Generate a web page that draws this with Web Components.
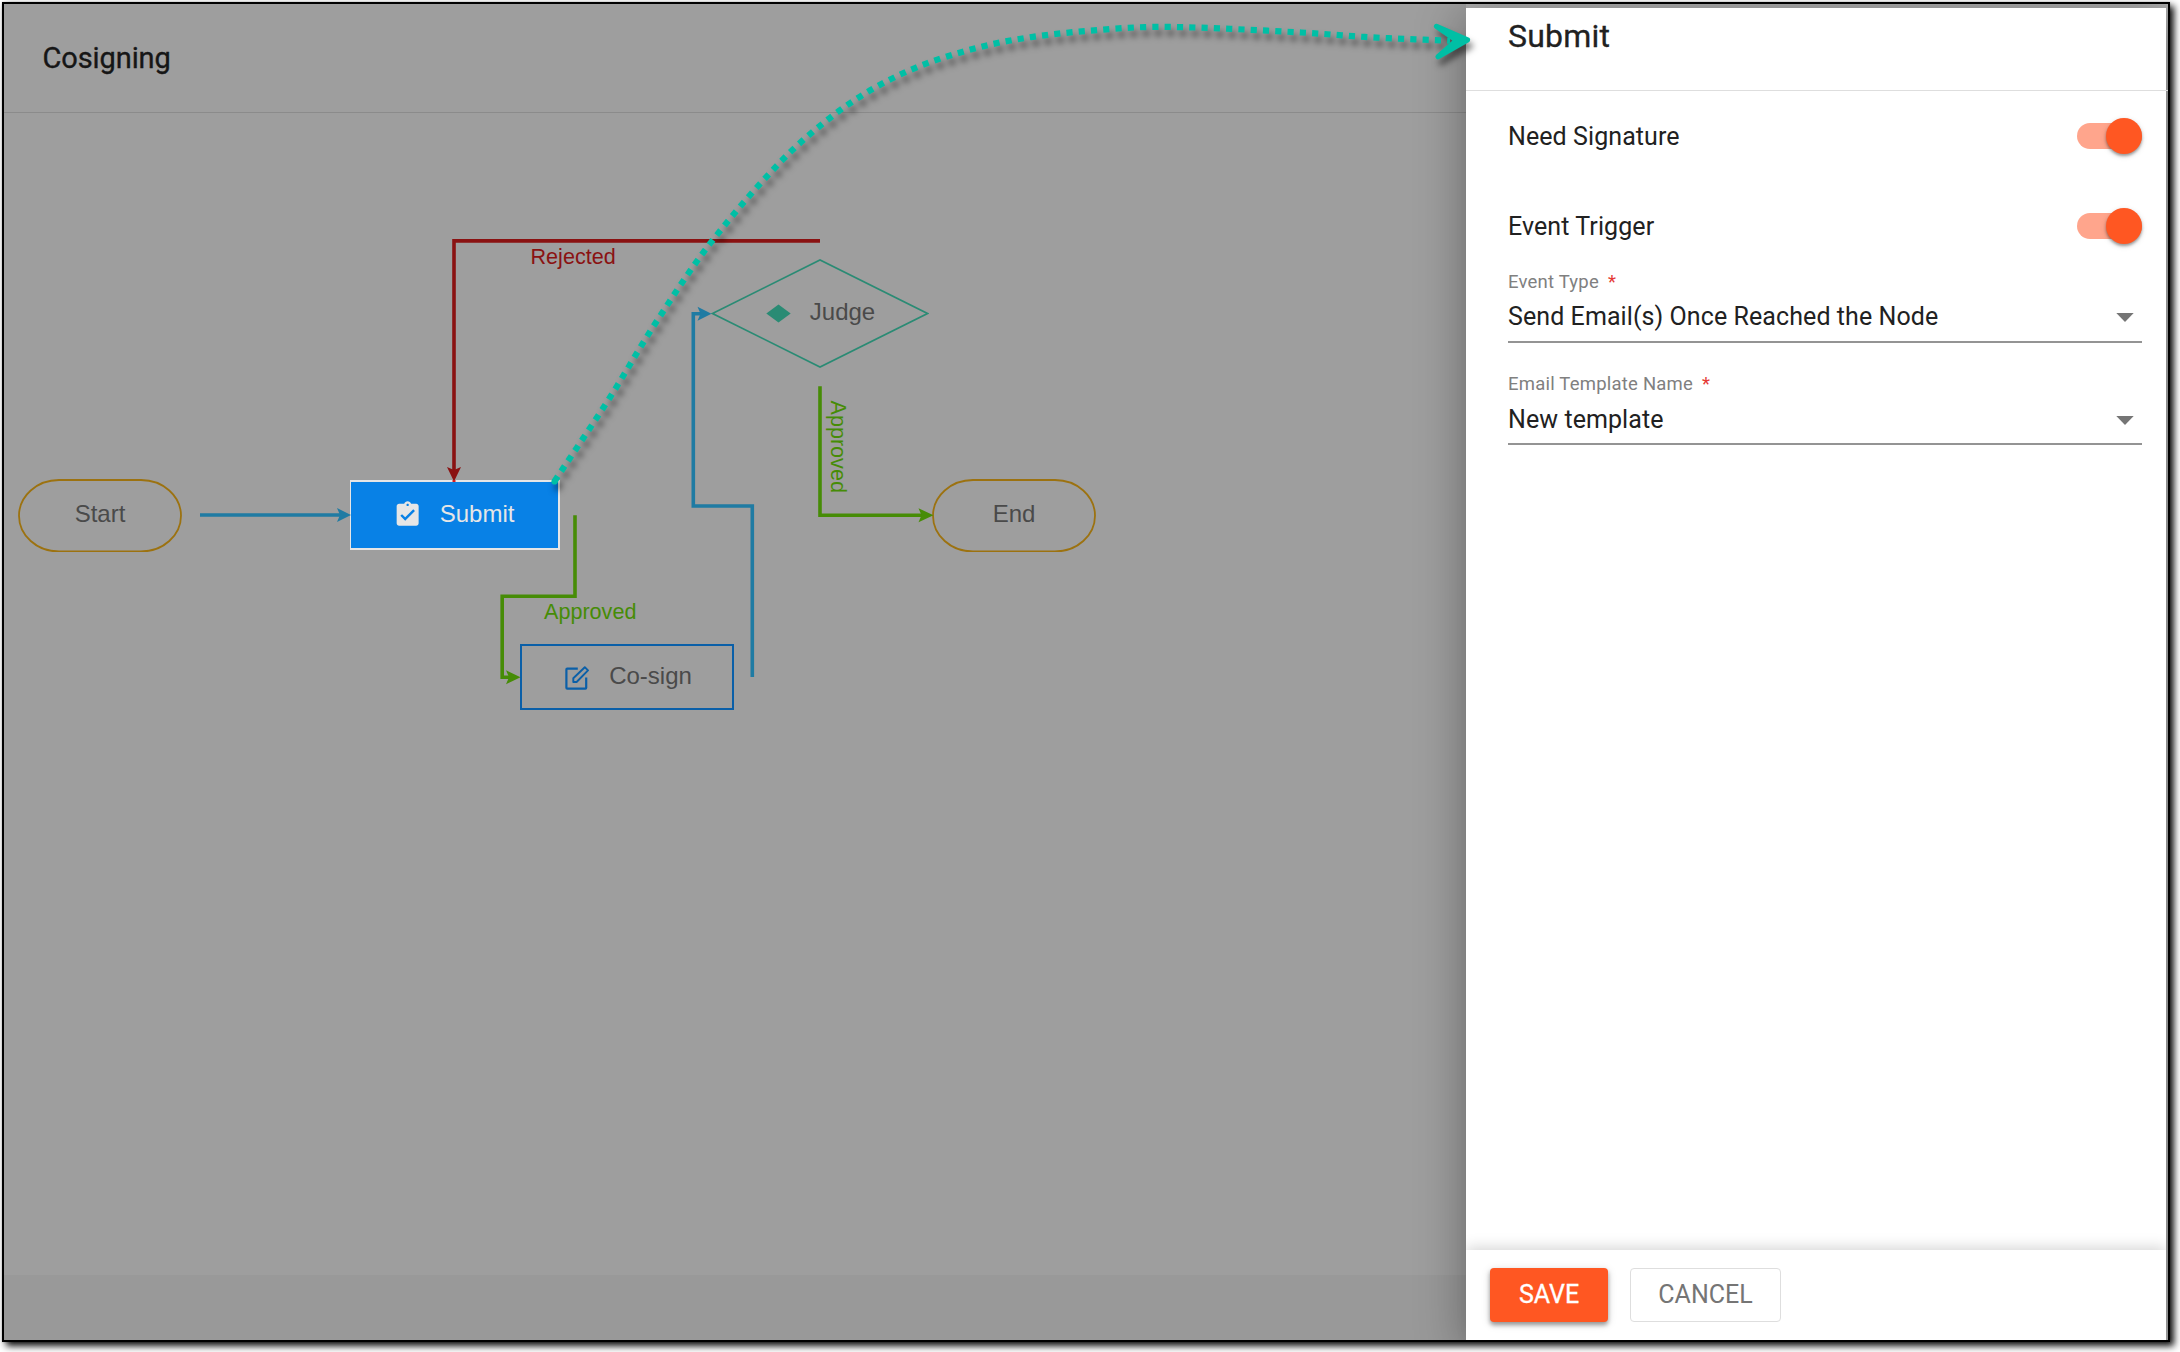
<!DOCTYPE html>
<html lang="en">
<head>
<meta charset="utf-8">
<title>Cosigning</title>
<style>
html,body{margin:0;background:#fff;overflow:hidden}
body{width:2180px;height:1352px;font-family:Roboto,sans-serif;color:#212121}
</style>
</head>
<body>
<app-frame>
  <workflow-page heading="Cosigning">
    <flow-canvas>
      <flow-node kind="pill" style="--x:18;--y:478.5;--w:164;--h:73.5">Start</flow-node>
      <flow-node kind="active" icon="clipboard" style="--x:350;--y:480;--w:210;--h:70">Submit</flow-node>
      <flow-node kind="box" icon="edit" style="--x:520;--y:644;--w:214;--h:66">Co-sign</flow-node>
      <flow-node kind="judge" icon="diamond" style="--x:711;--y:259;--w:218;--h:109">Judge</flow-node>
      <flow-node kind="pill" style="--x:932;--y:478.5;--w:164;--h:73.5">End</flow-node>
    </flow-canvas>
  </workflow-page>
  <side-drawer heading="Submit">
    <switch-row>Need Signature</switch-row>
    <switch-row>Event Trigger</switch-row>
    <select-field label="Event Type">Send Email(s) Once Reached the Node</select-field>
    <select-field label="Email Template Name">New template</select-field>
    <action-button slot="footer" kind="primary">SAVE</action-button>
    <action-button slot="footer" kind="plain">CANCEL</action-button>
  </side-drawer>
  <callout-arrow></callout-arrow>
</app-frame>
<script>
class Base extends HTMLElement {
  constructor(){ super(); this.attachShadow({mode:'open'}); }
  connectedCallback(){ this.shadowRoot.innerHTML = this.render(); }
}

customElements.define('app-frame', class extends Base {
  render(){ return `<style>
    :host{display:grid;grid-template-columns:1462px 702px;box-sizing:border-box;width:2168px;height:1340px;margin:2px;
      border:2px solid #000;background:#9e9e9e;position:relative;box-shadow:4px 4px 7px rgba(0,0,0,.95),0 0 2px rgba(0,0,0,.2)}
  </style><slot></slot>`; }
});

customElements.define('workflow-page', class extends Base {
  render(){ return `<style>
    :host{display:flex;flex-direction:column;height:1336px;min-width:0}
    header{box-sizing:border-box;height:109px;border-bottom:1px solid #8b8b8b;padding:36px 0 0 38.5px}
    h1{margin:0;font-size:29px;line-height:36px;font-weight:400;color:#161616;letter-spacing:-.1px;-webkit-text-stroke:.35px #161616}
    main{flex:1;min-height:0}
    footer{height:65px;background:#999}
  </style><header><h1>${this.getAttribute('heading')}</h1></header><main><slot></slot></main><footer></footer>`; }
});

customElements.define('flow-canvas', class extends Base {
  render(){ return `<style>
    :host{display:block;height:100%;position:relative}
    svg{display:block;width:1462px;height:1162px;position:relative;z-index:1;pointer-events:none}
    text{font:21.6px "Liberation Sans",Arial,sans-serif}
    .l{fill:none;stroke-width:3.6}
  </style>
  <svg viewBox="4 113 1462 1162">
    <g stroke="#1f7ba3" fill="#1f7ba3">
      <path class="l" d="M200 515H344M752.3 677V506H693.3V313.7H705"/>
      <path stroke="none" d="M351 515L337 522L340 515L337 508ZM711.5 313.7L697.5 320.7L700.5 313.7L697.5 306.7Z"/>
    </g>
    <g stroke="#468c06" fill="#468c06">
      <path class="l" d="M575 515.3V596.2H502.2V677.3H514M820 386.3V515.3H927"/>
      <path stroke="none" d="M520.5 677.3L506 684.3L509 677.3L506 670.3ZM933.5 515.3L918.5 522.3L921.5 515.3L918.5 508.3Z"/>
      <text stroke="none" x="544" y="619">Approved</text>
      <text stroke="none" transform="translate(830.5 400.5) rotate(90)">Approved</text>
    </g>
    <g stroke="#8a1212" fill="#8a1212">
      <path class="l" d="M820 240.9H454V474"/>
      <path stroke="none" d="M454 481.5L447 467L454 470L461 467Z"/>
      <path stroke="#d91c1c" d="M454 480V482" stroke-width="3"/>
      <text stroke="none" x="530.5" y="263.7">Rejected</text>
    </g>
  </svg><slot></slot>`; }
});

const ICONS = {
  clipboard:`<svg width="29.3" height="29.3" viewBox="0 0 24 24" style="margin:0 -3.6px"><path fill="#e6e6e6" d="M19 3h-4.18C14.4 1.84 13.3 1 12 1s-2.4.84-2.82 2H5c-1.1 0-2 .9-2 2v14c0 1.1.9 2 2 2h14c1.1 0 2-.9 2-2V5c0-1.1-.9-2-2-2zm-7 0c.55 0 1 .45 1 1s-.45 1-1 1-1-.45-1-1 .45-1 1-1zm-2 14l-4-4 1.41-1.41L10 14.17l6.59-6.59L18 9l-8 8z"/></svg>`,
  edit:`<svg width="24" height="24" viewBox="0 0 24 24" fill="none" stroke="#0a5fa8" stroke-width="2.2"><path d="M12.8 2.6H2.2Q1.4 2.6 1.4 3.4V21.8Q1.4 22.6 2.2 22.6H20.4Q21.2 22.6 21.2 21.8V11.5"/><path d="M8.3 16V12.2L19.8 1.2L23 4.4L11.6 16Z" stroke-width="1.9" stroke-linejoin="round"/></svg>`,
  diamond:`<svg width="25" height="19" viewBox="0 0 25 19"><path fill="#2a8b74" d="M12.5 .5L24.7 9.5L12.5 18.5L.3 9.5Z"/></svg>`
};

customElements.define('flow-node', class extends Base {
  render(){
    const k = this.getAttribute('kind'), i = this.getAttribute('icon');
    const shape = {
      pill:`<svg class="bg" viewBox="0 0 164 73.5"><rect x="1" y="1" width="162" height="71.5" rx="40" ry="35.75" fill="none" stroke="#9c7210" stroke-width="1.8"/></svg>`,
      judge:`<svg class="bg" viewBox="0 0 218 109"><path d="M1.5 54.5L109 1L216.500 54.5L109 108Z" fill="none" stroke="#2a8b74" stroke-width="1.6"/></svg>`
    }[k] || '';
    return `<style>
    :host{display:flex;box-sizing:border-box;position:absolute;left:calc((var(--x) - 4)*1px);top:calc((var(--y) - 113)*1px);
      width:calc(var(--w)*1px);height:calc(var(--h)*1px);align-items:center;justify-content:center;
      font:24px/28px "Liberation Sans",Arial,sans-serif;color:#4a4a4a}
    :host([kind=active]){background:#0881e6;border:solid #e6e6e6;border-width:2px 2.500px 2px 1px;color:#e6e6e6}
    :host([kind=box]){border:2px solid #0a5fa8}
    .bg{position:absolute;inset:0;width:100%;height:100%}
    .c{display:flex;align-items:center;gap:22px;padding-bottom:1px}
    :host([kind=judge]) .c{gap:19px;margin-left:1px}
    .t{padding-bottom:2px}
    .c>svg{flex:none;display:block}
    :host([kind=box]) .c>svg{margin-top:3px}
    :host([kind=box]) .c{gap:20px;margin-left:3px}
    :host([kind=active]) .c{gap:21px;margin-left:2px}
    </style>${shape}<div class="c">${ICONS[i]||''}<span class="t"><slot></slot></span></div>`;
  }
});

customElements.define('side-drawer', class extends Base {
  render(){ return `<style>
    :host{display:block;height:1336px;background:#aeaeae;clip-path:inset(0 0 0 -80px);position:relative}
    .panel{display:flex;flex-direction:column;box-sizing:border-box;width:700px;height:1332px;margin-top:4px;background:#fff;
      box-shadow:0 16px 20px -10px rgba(0,0,0,.1),0 8px 44px 4px rgba(0,0,0,.3)}
    header{box-sizing:border-box;width:702px;height:83px;border-bottom:1px solid #dedede;padding:8px 0 0 42px}
    h2{margin:0;font-size:32px;line-height:40px;font-weight:400;letter-spacing:.2px;-webkit-text-stroke:.3px #212121}
    .body{flex:1;display:flex;flex-direction:column;padding:0 24px 0 42px;overflow:hidden}
    footer{box-sizing:border-box;height:90px;display:flex;gap:22px;padding:18px 24px;box-shadow:0 -2px 14px rgba(0,0,0,.18);clip-path:inset(-20px 0 0 0)}
  </style><div class="panel"><header><h2>${this.getAttribute('heading')}</h2></header><div class="body"><slot></slot></div><footer><slot name="footer"></slot></footer></div>`; }
});

customElements.define('switch-row', class extends Base {
  render(){ return `<style>
    :host{display:flex;height:90px;align-items:center;justify-content:space-between;font-size:25px;line-height:30px;letter-spacing:.08px}
    span{padding-top:2px}
    .track{width:65px;height:26px;border-radius:13px;background:#ffa58c;display:flex;align-items:center;justify-content:flex-end}
    .thumb{width:36px;height:36px;flex:none;border-radius:50%;background:#ff5722;box-shadow:0 2px 3px rgba(0,0,0,.35),0 2px 6px rgba(0,0,0,.12)}
  </style><span><slot></slot></span><div class="track"><div class="thumb"></div></div>`; }
});

customElements.define('select-field', class extends Base {
  render(){ return `<style>
    :host{display:flex;flex-direction:column;box-sizing:border-box;height:72px;border-bottom:2px solid #949494;margin-bottom:30px}
    .lab{display:flex;gap:9px;font-size:18.5px;line-height:22px;color:#808080;letter-spacing:.22px}
    i{font-style:normal;color:#e53935}
    .val{display:flex;align-items:center;justify-content:space-between;margin-top:9px;height:30px;font-size:25px;line-height:30px;letter-spacing:.08px;padding-right:8px}
    :host(:last-of-type) .val{margin-top:10px}
  </style><div class="lab"><span>${this.getAttribute('label')}</span><i>*</i></div>
  <div class="val"><span><slot></slot></span><svg width="18" height="9" viewBox="0 0 18 9"><path fill="#757575" d="M.3 0H17.700L9 9Z"/></svg></div>`; }
});

customElements.define('action-button', class extends Base {
  render(){ return `<style>
    :host{display:flex;align-items:center;justify-content:center;box-sizing:border-box;width:118px;height:54px;border-radius:4px;font-size:25px;line-height:30px}
    :host([kind=primary]){background:#ff5722;color:#fff;-webkit-text-stroke:.3px #fff;box-shadow:0 3px 4px rgba(0,0,0,.35),0 2px 10px rgba(0,0,0,.15)}
    :host([kind=plain]){width:151px;border:1px solid #dedede;color:#757575}
  </style><span><slot></slot></span>`; }
});

customElements.define('callout-arrow', class extends Base {
  render(){
    const p=[[554.4,481.5],[609.6,398],[654.3,325],[710,243.7],[781.7,160.7],[836.8,112.7],[889,80],[945.3,57],[1017,39.3],[1114,28.7],[1175.5,27],[1297.8,32.3],[1370.7,37.3],[1450,40.7]];
    let d=`M${p[0]}`;
    // Tangents are weighted by the distance between neighbours so the uneven spacing stays smooth.
    const L=(a,b)=>Math.hypot(a[0]-b[0],a[1]-b[1]);
    const tan=i=>{const a=p[i-1]||p[i],b=p[i+1]||p[i],n=L(a,b);return [(b[0]-a[0])/n,(b[1]-a[1])/n]};
    for(let i=0;i<p.length-1;i++){
      const s=L(p[i],p[i+1])/3,t=tan(i),u=tan(i+1);
      d+=`C${p[i][0]+t[0]*s} ${p[i][1]+t[1]*s} ${p[i+1][0]-u[0]*s} ${p[i+1][1]-u[1]*s} ${p[i+1]}`;
    }
    return `<style>
    :host{display:block;position:absolute;left:-4px;top:-4px;width:1500px;height:520px;pointer-events:none;z-index:5}
    svg{display:block;filter:drop-shadow(3px 6px 3px rgba(0,0,0,.5))}
    </style><svg width="1500" height="520" viewBox="0 0 1500 520">
    <path d="${d}" fill="none" stroke="#00bfa5" stroke-width="6.2" stroke-dasharray="6.2 6.1"/>
    <circle cx="554.5" cy="481.5" r="3.1" fill="#00bfa5"/>
    <path d="M1436.5 26.3L1467.500 40L1438 56.8L1456.500 40.5Z" fill="#00bfa5" stroke="#00bfa5" stroke-width="5.200" stroke-linejoin="round"/></svg>`;
  }
});
</script>
</body>
</html>
